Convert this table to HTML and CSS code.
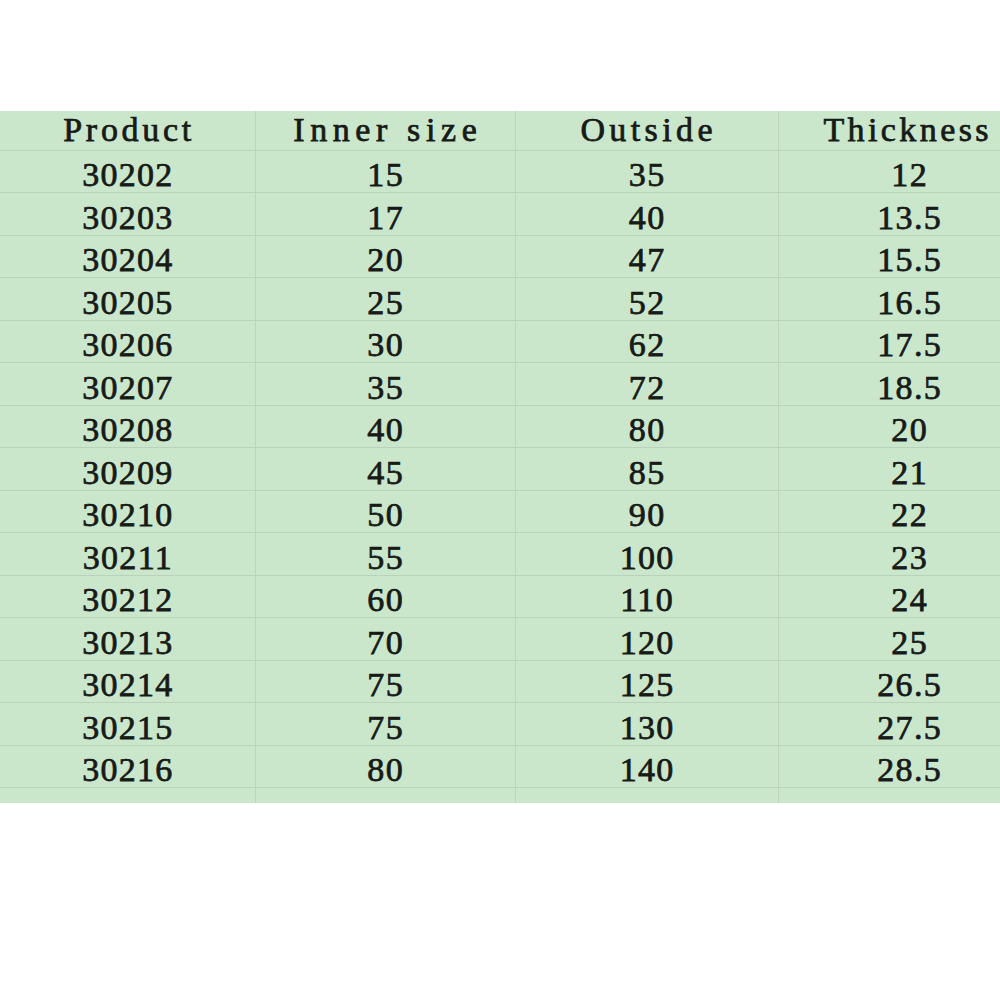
FILE: index.html
```html
<!DOCTYPE html>
<html>
<head>
<meta charset="utf-8">
<link rel="stylesheet" href="styles.css">
</head>
<body>
<div class="sheet">
<table class="grid">
<colgroup><col class="c1"><col class="c2"><col class="c3"><col class="c4"></colgroup>
<thead>
<tr class="head"><th><span class="h-product">Product</span></th><th><span class="h-inner">Inner size</span></th><th><span class="h-outside">Outside</span></th><th><span class="h-thick">Thickness</span></th></tr>
</thead>
<tbody>
<tr><td><span>30202</span></td><td><span>15</span></td><td><span>35</span></td><td><span>12</span></td></tr>
<tr><td><span>30203</span></td><td><span>17</span></td><td><span>40</span></td><td><span>13.5</span></td></tr>
<tr><td><span>30204</span></td><td><span>20</span></td><td><span>47</span></td><td><span>15.5</span></td></tr>
<tr><td><span>30205</span></td><td><span>25</span></td><td><span>52</span></td><td><span>16.5</span></td></tr>
<tr><td><span>30206</span></td><td><span>30</span></td><td><span>62</span></td><td><span>17.5</span></td></tr>
<tr><td><span>30207</span></td><td><span>35</span></td><td><span>72</span></td><td><span>18.5</span></td></tr>
<tr><td><span>30208</span></td><td><span>40</span></td><td><span>80</span></td><td><span>20</span></td></tr>
<tr><td><span>30209</span></td><td><span>45</span></td><td><span>85</span></td><td><span>21</span></td></tr>
<tr><td><span>30210</span></td><td><span>50</span></td><td><span>90</span></td><td><span>22</span></td></tr>
<tr><td><span>30211</span></td><td><span>55</span></td><td><span>100</span></td><td><span>23</span></td></tr>
<tr><td><span>30212</span></td><td><span>60</span></td><td><span>110</span></td><td><span>24</span></td></tr>
<tr><td><span>30213</span></td><td><span>70</span></td><td><span>120</span></td><td><span>25</span></td></tr>
<tr><td><span>30214</span></td><td><span>75</span></td><td><span>125</span></td><td><span>26.5</span></td></tr>
<tr><td><span>30215</span></td><td><span>75</span></td><td><span>130</span></td><td><span>27.5</span></td></tr>
<tr><td><span>30216</span></td><td><span>80</span></td><td><span>140</span></td><td><span>28.5</span></td></tr>
<tr class="tail"><td></td><td></td><td></td><td></td></tr>
</tbody>
</table>
</div>
</body>
</html>
```

FILE: styles.css
```css
html, body {
  margin: 0;
  padding: 0;
  background: #ffffff;
  overflow: hidden;
}
.sheet {
  width: 1000px;
  height: 1000px;
  overflow: hidden;
  padding-top: 111px;
  box-sizing: border-box;
}
.grid {
  width: 1040px;
  table-layout: fixed;
  border-collapse: collapse;
  background: #cae7cc;
  font-family: "Liberation Serif", "DejaVu Serif", serif;
  font-size: 34px;
  color: #171a17;
}
.c1 { width: 255px; }
.c2 { width: 260px; }
.c3 { width: 263px; }
.c4 { width: 262px; }
.grid th, .grid td {
  padding: 0;
  text-align: center;
  vertical-align: top;
  font-weight: normal;
  border-right: 1px solid #bdd5bf;
  border-bottom: 1px solid #b9d2bb;
  line-height: 34px;
  white-space: nowrap;
  box-sizing: border-box;
}
.grid th span, .grid td span {
  display: inline-block;
  letter-spacing: 1.3px;
  margin-right: -1.3px;
  -webkit-text-stroke: 0.75px #171a17;
}
.head th {
  height: 39px;
  padding-top: 2px;
}
.grid th .h-product { letter-spacing: 3.7px; margin-right: -3.7px; }
.grid th .h-inner { letter-spacing: 5.6px; margin-right: -5.6px; }
.grid th .h-outside { letter-spacing: 4.4px; margin-right: -4.4px; }
.grid th .h-thick { letter-spacing: 3.4px; margin-right: -3.4px; padding-right: 6px; }
.grid tbody td {
  height: 42.5px;
  padding-top: 7.5px;
}
.grid tbody tr.tail td {
  height: 15px;
  padding: 0;
  border-bottom: none;
}
```
